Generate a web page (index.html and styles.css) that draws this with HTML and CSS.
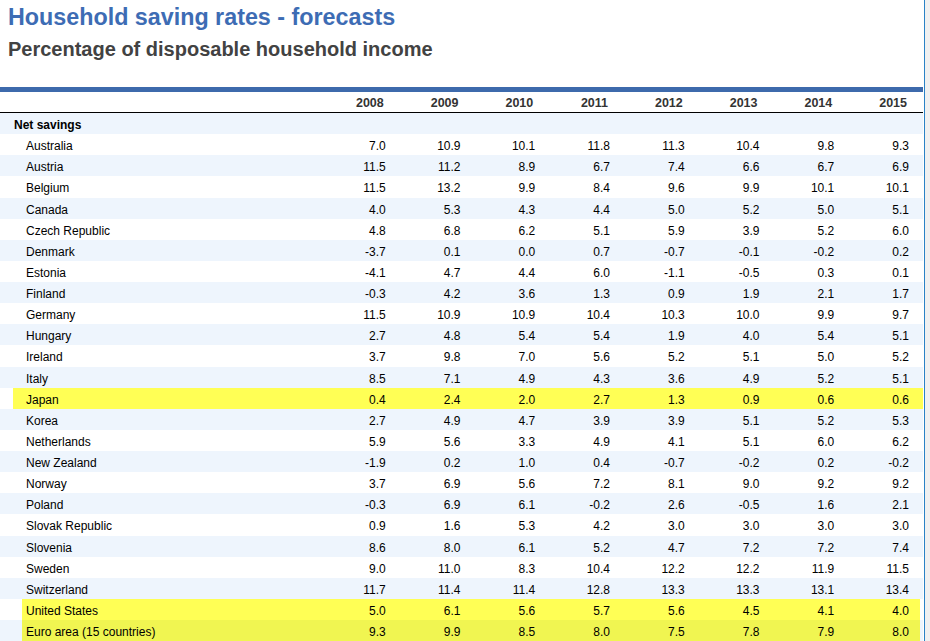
FILE: index.html
```html
<!DOCTYPE html>
<html>
<head>
<meta charset="utf-8">
<link rel="stylesheet" href="styles.css">
</head>
<body>
<div class="frame">
  <header class="head">
    <h1 class="title">Household saving rates - forecasts</h1>
    <h2 class="subtitle">Percentage of disposable household income</h2>
  </header>
  <div class="bar"></div>
  <div class="table">
    <div class="row hdr"><div class="in"><span class="name"></span><span>2008</span><span>2009</span><span>2010</span><span>2011</span><span>2012</span><span>2013</span><span>2014</span><span>2015</span></div></div>
    <div class="row alt sect"><div class="in"><span class="name">Net savings</span></div></div>
    <div class="row"><div class="in"><span class="name">Australia</span><span>7.0</span><span>10.9</span><span>10.1</span><span>11.8</span><span>11.3</span><span>10.4</span><span>9.8</span><span>9.3</span></div></div>
    <div class="row alt"><div class="in"><span class="name">Austria</span><span>11.5</span><span>11.2</span><span>8.9</span><span>6.7</span><span>7.4</span><span>6.6</span><span>6.7</span><span>6.9</span></div></div>
    <div class="row"><div class="in"><span class="name">Belgium</span><span>11.5</span><span>13.2</span><span>9.9</span><span>8.4</span><span>9.6</span><span>9.9</span><span>10.1</span><span>10.1</span></div></div>
    <div class="row alt"><div class="in"><span class="name">Canada</span><span>4.0</span><span>5.3</span><span>4.3</span><span>4.4</span><span>5.0</span><span>5.2</span><span>5.0</span><span>5.1</span></div></div>
    <div class="row"><div class="in"><span class="name">Czech Republic</span><span>4.8</span><span>6.8</span><span>6.2</span><span>5.1</span><span>5.9</span><span>3.9</span><span>5.2</span><span>6.0</span></div></div>
    <div class="row alt"><div class="in"><span class="name">Denmark</span><span>-3.7</span><span>0.1</span><span>0.0</span><span>0.7</span><span>-0.7</span><span>-0.1</span><span>-0.2</span><span>0.2</span></div></div>
    <div class="row"><div class="in"><span class="name">Estonia</span><span>-4.1</span><span>4.7</span><span>4.4</span><span>6.0</span><span>-1.1</span><span>-0.5</span><span>0.3</span><span>0.1</span></div></div>
    <div class="row alt"><div class="in"><span class="name">Finland</span><span>-0.3</span><span>4.2</span><span>3.6</span><span>1.3</span><span>0.9</span><span>1.9</span><span>2.1</span><span>1.7</span></div></div>
    <div class="row"><div class="in"><span class="name">Germany</span><span>11.5</span><span>10.9</span><span>10.9</span><span>10.4</span><span>10.3</span><span>10.0</span><span>9.9</span><span>9.7</span></div></div>
    <div class="row alt"><div class="in"><span class="name">Hungary</span><span>2.7</span><span>4.8</span><span>5.4</span><span>5.4</span><span>1.9</span><span>4.0</span><span>5.4</span><span>5.1</span></div></div>
    <div class="row"><div class="in"><span class="name">Ireland</span><span>3.7</span><span>9.8</span><span>7.0</span><span>5.6</span><span>5.2</span><span>5.1</span><span>5.0</span><span>5.2</span></div></div>
    <div class="row alt"><div class="in"><span class="name">Italy</span><span>8.5</span><span>7.1</span><span>4.9</span><span>4.3</span><span>3.6</span><span>4.9</span><span>5.2</span><span>5.1</span></div></div>
    <div class="row hl-a"><div class="in"><span class="name">Japan</span><span>0.4</span><span>2.4</span><span>2.0</span><span>2.7</span><span>1.3</span><span>0.9</span><span>0.6</span><span>0.6</span></div></div>
    <div class="row alt"><div class="in"><span class="name">Korea</span><span>2.7</span><span>4.9</span><span>4.7</span><span>3.9</span><span>3.9</span><span>5.1</span><span>5.2</span><span>5.3</span></div></div>
    <div class="row"><div class="in"><span class="name">Netherlands</span><span>5.9</span><span>5.6</span><span>3.3</span><span>4.9</span><span>4.1</span><span>5.1</span><span>6.0</span><span>6.2</span></div></div>
    <div class="row alt"><div class="in"><span class="name">New Zealand</span><span>-1.9</span><span>0.2</span><span>1.0</span><span>0.4</span><span>-0.7</span><span>-0.2</span><span>0.2</span><span>-0.2</span></div></div>
    <div class="row"><div class="in"><span class="name">Norway</span><span>3.7</span><span>6.9</span><span>5.6</span><span>7.2</span><span>8.1</span><span>9.0</span><span>9.2</span><span>9.2</span></div></div>
    <div class="row alt"><div class="in"><span class="name">Poland</span><span>-0.3</span><span>6.9</span><span>6.1</span><span>-0.2</span><span>2.6</span><span>-0.5</span><span>1.6</span><span>2.1</span></div></div>
    <div class="row"><div class="in"><span class="name">Slovak Republic</span><span>0.9</span><span>1.6</span><span>5.3</span><span>4.2</span><span>3.0</span><span>3.0</span><span>3.0</span><span>3.0</span></div></div>
    <div class="row alt"><div class="in"><span class="name">Slovenia</span><span>8.6</span><span>8.0</span><span>6.1</span><span>5.2</span><span>4.7</span><span>7.2</span><span>7.2</span><span>7.4</span></div></div>
    <div class="row"><div class="in"><span class="name">Sweden</span><span>9.0</span><span>11.0</span><span>8.3</span><span>10.4</span><span>12.2</span><span>12.2</span><span>11.9</span><span>11.5</span></div></div>
    <div class="row alt"><div class="in"><span class="name">Switzerland</span><span>11.7</span><span>11.4</span><span>11.4</span><span>12.8</span><span>13.3</span><span>13.3</span><span>13.1</span><span>13.4</span></div></div>
    <div class="row hl-b"><div class="in"><span class="name">United States</span><span>5.0</span><span>6.1</span><span>5.6</span><span>5.7</span><span>5.6</span><span>4.5</span><span>4.1</span><span>4.0</span></div></div>
    <div class="row alt hl-c"><div class="in"><span class="name">Euro area (15 countries)</span><span>9.3</span><span>9.9</span><span>8.5</span><span>8.0</span><span>7.5</span><span>7.8</span><span>7.9</span><span>8.0</span></div></div>
  </div>
</div>
</body>
</html>
```
FILE: styles.css
```css
html, body {
  margin: 0;
  padding: 0;
  background: #f0f0f0;
  height: 100%;
  overflow: hidden;
}
.frame {
  width: 924px;
  min-height: 100%;
  background: #ffffff;
  border-right: 1px solid #2a82c6;
  font-family: "Liberation Sans", Arial, sans-serif;
}
.head {
  height: 87px;
  box-sizing: border-box;
  padding: 4px 0 0 8px;
}
.title {
  margin: 0;
  font-size: 23.3px;
  line-height: 27px;
  font-weight: bold;
  color: #3d6cb4;
}
.subtitle {
  margin: 6px 0 0 0;
  font-size: 20px;
  line-height: 24px;
  font-weight: bold;
  color: #424242;
}
.bar {
  height: 5px;
  background: #3d6aac;
  margin-right: 1px;
}
.table {
  margin-right: 1px;
  font-size: 12px;
  color: #000;
}
.row {
  height: 21.13px;
  display: flex;
}
.row.alt {
  background: #eef5fd;
}
.in {
  flex: 1;
  display: grid;
  grid-template-columns: 1fr repeat(8, 74.75px);
  padding-right: 11px;
  align-items: center;
  line-height: 21px;
  padding-top: 2px;
  box-sizing: border-box;
}
.in span {
  text-align: right;
  padding-right: 3px;
  white-space: nowrap;
}
.in .name {
  text-align: left;
  padding-left: 26px;
}
.hdr {
  height: 20px;
  border-bottom: 1px solid #000;
}
.hdr .in {
  line-height: 20px;
  padding-top: 1px;
  font-weight: bold;
  font-size: 12.5px;
  color: #333;
}
.hdr .in span {
  padding-right: 5px;
}
.sect .name {
  font-weight: bold;
  padding-left: 14px;
}
.hl-a .in {
  margin-left: 13px;
  background: #ffff55;
}
.hl-a .in .name {
  padding-left: 13px;
}
.hl-b .in,
.hl-c .in {
  margin-left: 22px;
  margin-right: 3px;
  padding-right: 8px;
}
.hl-b .in {
  background: #ffff55;
}
.hl-c .in {
  background: #f0f551;
}
.hl-b .in .name,
.hl-c .in .name {
  padding-left: 4px;
}
```
